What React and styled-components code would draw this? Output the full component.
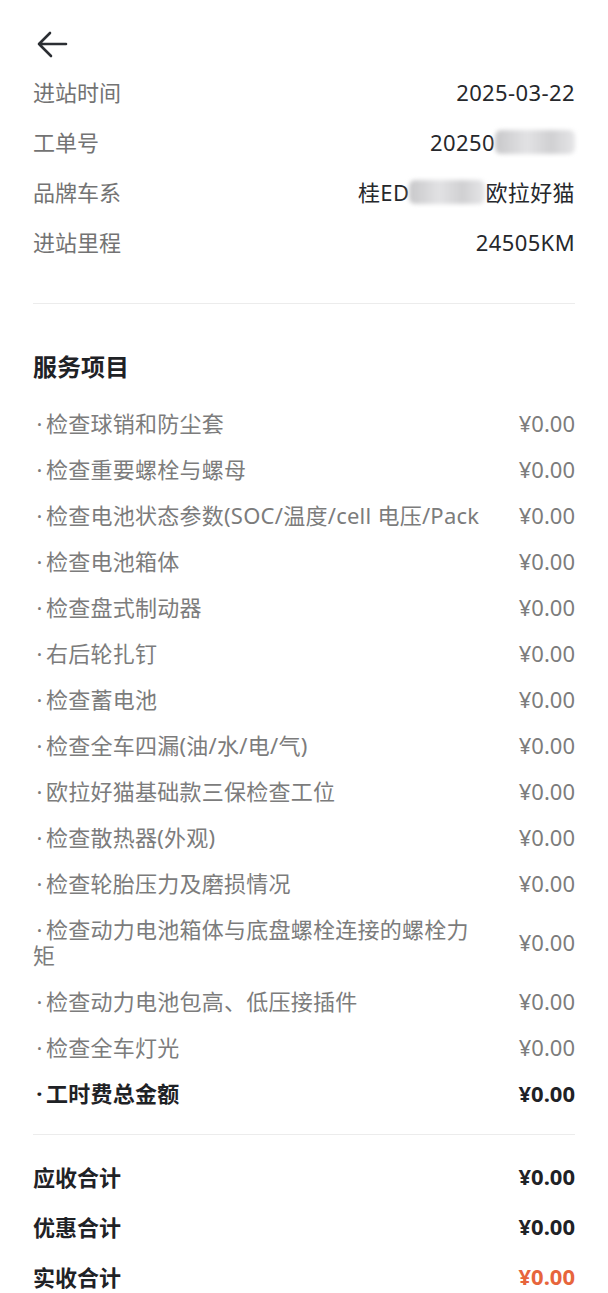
import styled, { createGlobalStyle } from 'styled-components';

const info = [
  { label: '进站时间', value: ['2025-03-22'] },
  { label: '工单号', value: ['20250', { blur: 80 }] },
  { label: '品牌车系', value: ['桂ED', { blur: 76 }, '欧拉好猫'] },
  { label: '进站里程', value: ['24505KM'] },
];

const items = [
  '检查球销和防尘套',
  '检查重要螺栓与螺母',
  '检查电池状态参数(SOC/温度/cell 电压/Pack',
  '检查电池箱体',
  '检查盘式制动器',
  '右后轮扎钉',
  '检查蓄电池',
  '检查全车四漏(油/水/电/气)',
  '欧拉好猫基础款三保检查工位',
  '检查散热器(外观)',
  '检查轮胎压力及磨损情况',
  '检查动力电池箱体与底盘螺栓连接的螺栓力矩',
  '检查动力电池包高、低压接插件',
  '检查全车灯光',
];

const totals = [
  { label: '应收合计', value: '¥0.00' },
  { label: '优惠合计', value: '¥0.00' },
  { label: '实收合计', value: '¥0.00', accent: true },
];

export default function App() {
  return (
    <Page>
      <GlobalStyle />
      <Header>
        <Back aria-label="返回">
          <svg width="32" height="30" viewBox="0 0 32 30" fill="none">
            <path d="M30 14H3M14 3L3 14L15 26" stroke="#2b2e33" strokeWidth="2.6" strokeLinecap="round" strokeLinejoin="round" />
          </svg>
        </Back>
      </Header>

      <InfoList>
        {info.map((row) => (
          <InfoRow key={row.label}>
            <InfoLabel>{row.label}</InfoLabel>
            <InfoValue>
              {row.value.map((part, i) =>
                typeof part === 'string' ? <span key={i}>{part}</span> : <Blur key={i} $w={part.blur} />
              )}
            </InfoValue>
          </InfoRow>
        ))}
      </InfoList>

      <Divider $top={35} />

      <Title>服务项目</Title>
      <ItemList>
        {items.map((name) => (
          <ItemRow key={name}>
            <ItemName>
              <Dot>·</Dot>
              {name}
            </ItemName>
            <ItemPrice>¥0.00</ItemPrice>
          </ItemRow>
        ))}
        <ItemRow $bold>
          <ItemName>
            <Dot>·</Dot>工时费总金额
          </ItemName>
          <ItemPrice>¥0.00</ItemPrice>
        </ItemRow>
      </ItemList>

      <Divider $top={18} />

      <TotalList>
        {totals.map((t) => (
          <TotalRow key={t.label}>
            <span>{t.label}</span>
            <TotalValue $accent={t.accent}>{t.value}</TotalValue>
          </TotalRow>
        ))}
      </TotalList>
    </Page>
  );
}

const GlobalStyle = createGlobalStyle`
  html, body {
    margin: 0;
    padding: 0;
    background: #fff;
  }
  body {
    font-family: "Noto Sans", "Noto Sans CJK SC", sans-serif;
    -webkit-font-smoothing: antialiased;
  }
`;

const Page = styled.div`
  width: 608px;
  box-sizing: border-box;
  padding: 0 33px;
  overflow: hidden;
`;

const Header = styled.div`
  height: 68px;
  display: flex;
  align-items: flex-start;
  padding-top: 30px;
  box-sizing: border-box;
`;

const Back = styled.button`
  border: 0;
  background: none;
  padding: 0;
  margin-left: 3px;
  width: 32px;
  height: 30px;
  display: flex;
  cursor: pointer;
`;

const InfoList = styled.div`
  display: flex;
  flex-direction: column;
`;

const InfoRow = styled.div`
  height: 50px;
  display: flex;
  align-items: center;
  justify-content: space-between;
  font-size: 22px;
  line-height: 28px;
  padding-bottom: 3px;
  box-sizing: border-box;
`;

const InfoLabel = styled.span`
  color: #737373;
`;

const InfoValue = styled.span`
  color: #26282c;
  display: flex;
  align-items: center;
  letter-spacing: 0.4px;
`;

const Blur = styled.span`
  display: inline-block;
  width: ${(p) => p.$w}px;
  height: 24px;
  background: linear-gradient(90deg, #c8c8ca 0%, #e2e2e4 40%, #d0d0d2 70%, #e6e6e8 100%);
  filter: blur(2px);
  border-radius: 6px;
`;

const Divider = styled.div`
  height: 1px;
  background: #ececec;
  margin-top: ${(p) => p.$top}px;
`;

const Title = styled.div`
  margin-top: 46px;
  line-height: 34px;
  font-size: 24px;
  font-weight: 700;
  color: #1f2226;
`;

const ItemList = styled.div`
  margin-top: 16px;
  display: flex;
  flex-direction: column;
`;

const ItemRow = styled.div`
  display: flex;
  align-items: center;
  gap: 14px;
  padding: 10px 0;
  font-size: 22px;
  line-height: 26px;
  letter-spacing: 0.25px;
  font-weight: ${(p) => (p.$bold ? 700 : 400)};
  color: ${(p) => (p.$bold ? '#1f2226' : '#7c7c7c')};
`;

const ItemName = styled.span`
  flex: 1;
`;

const Dot = styled.span`
  display: inline-block;
  width: 13px;
  text-align: center;
`;

const ItemPrice = styled.span`
  flex-shrink: 0;
  width: 76px;
  text-align: right;
  letter-spacing: 0;
`;

const TotalList = styled.div`
  margin-top: 16px;
  display: flex;
  flex-direction: column;
`;

const TotalRow = styled.div`
  height: 50px;
  display: flex;
  align-items: center;
  justify-content: space-between;
  font-size: 22px;
  font-weight: 700;
  color: #1f2226;
`;

const TotalValue = styled.span`
  color: ${(p) => (p.$accent ? '#e7653c' : '#1f2226')};
`;
